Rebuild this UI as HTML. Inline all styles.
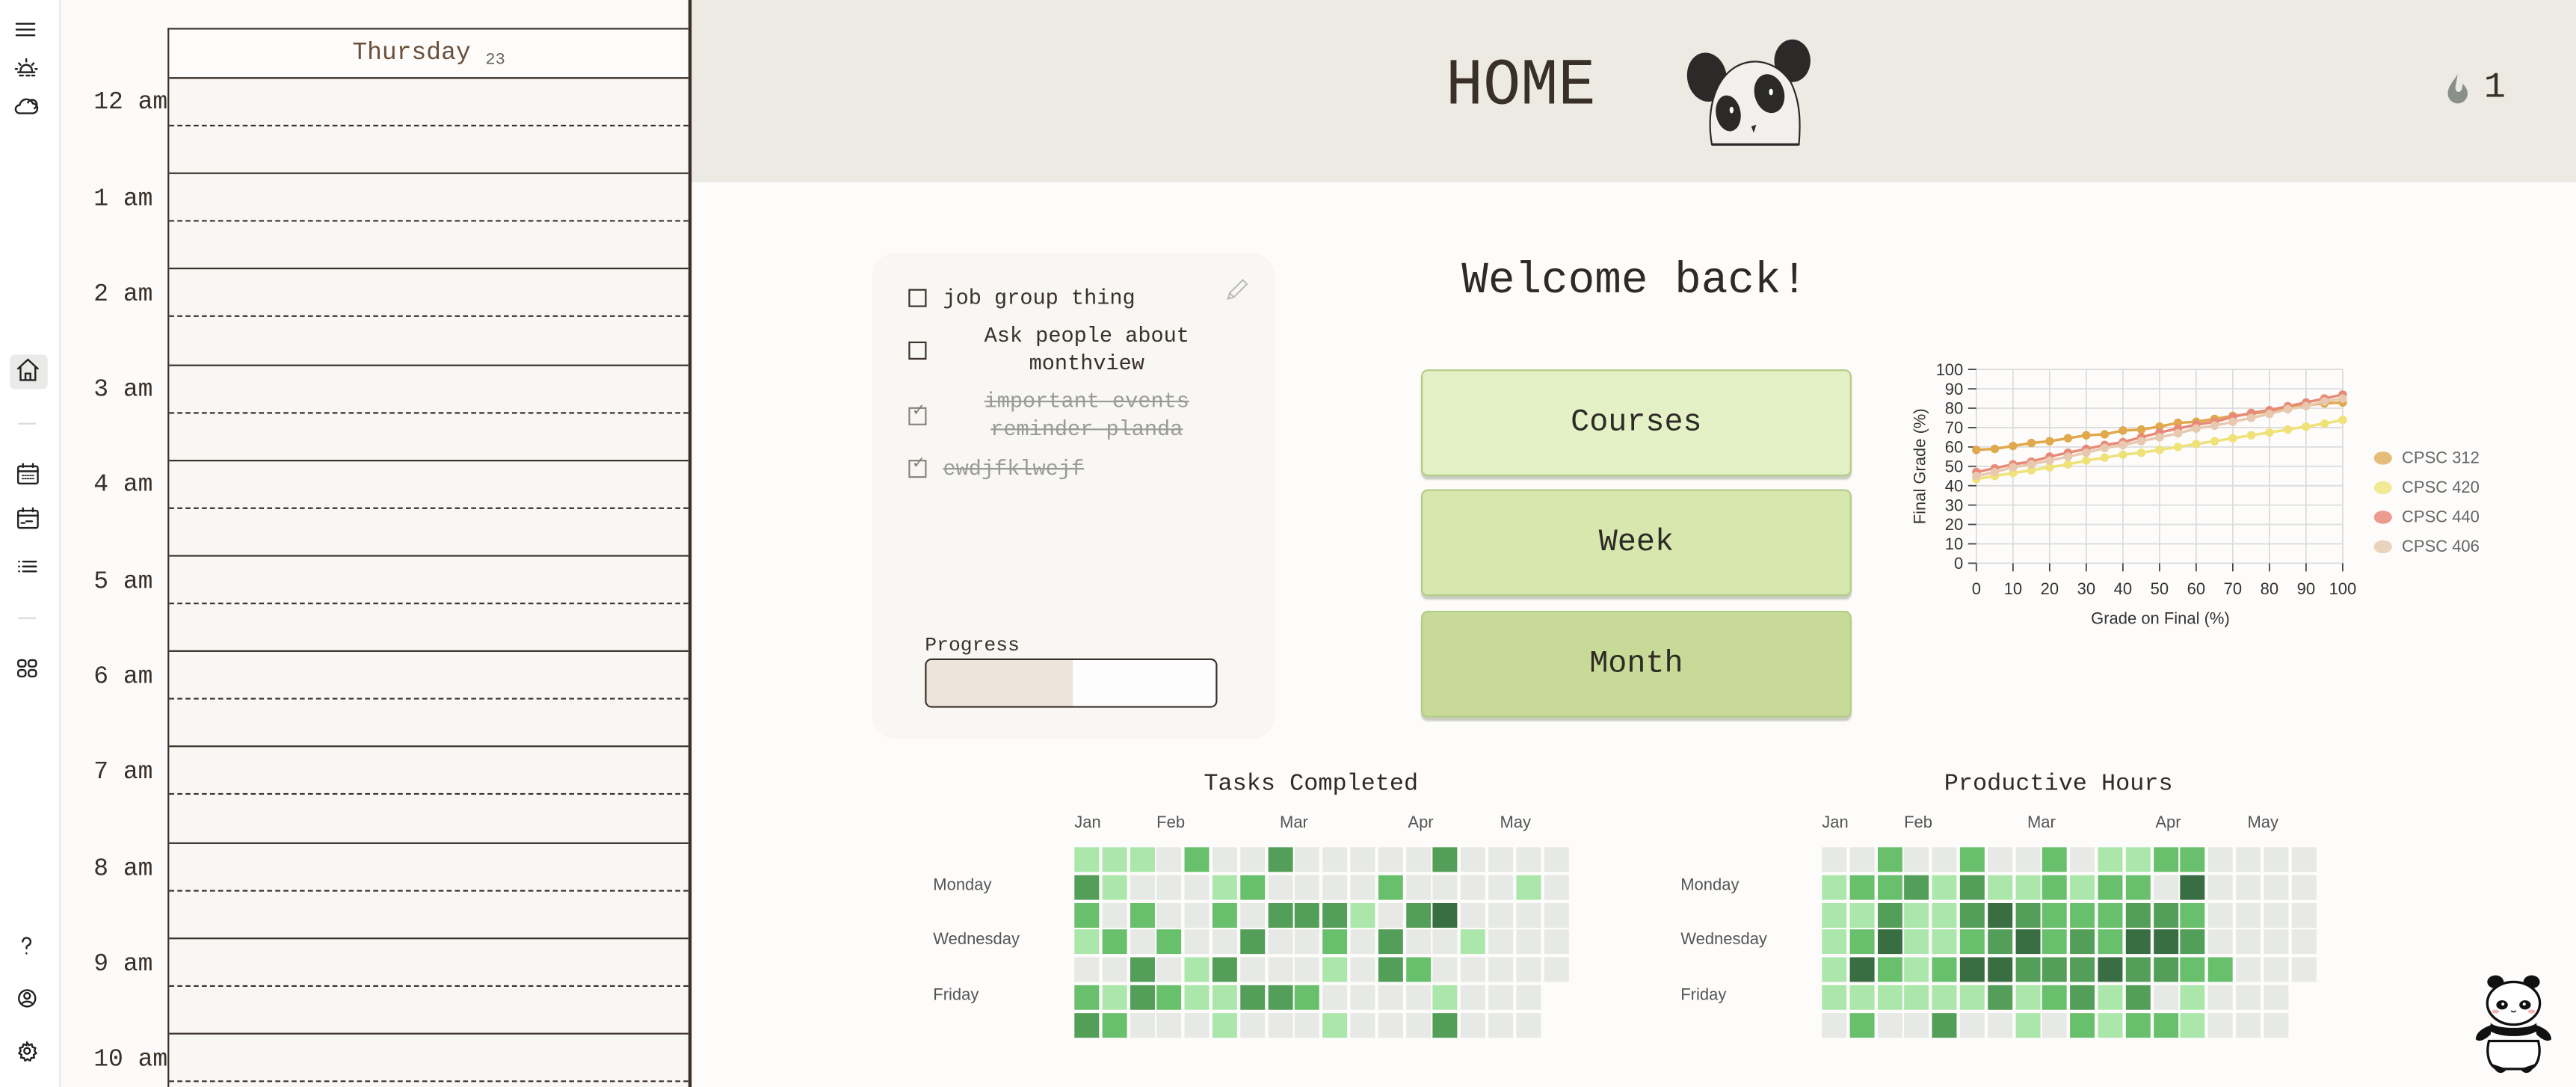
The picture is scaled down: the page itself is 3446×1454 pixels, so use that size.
<!DOCTYPE html>
<html><head><meta charset="utf-8">
<style>
html,body{margin:0;padding:0;width:3446px;height:1454px;overflow:hidden;background:#fdfcfb}
#s{position:absolute;left:0;top:0;width:1568px;height:662px;overflow:hidden;transform:scale(2.19770,2.19637);transform-origin:0 0;font-family:"Liberation Mono","DejaVu Sans Mono",monospace;color:#3a302a}
.a{position:absolute}
#side{left:0;top:0;width:36px;height:662px;background:#fff;border-right:1px solid #e8e8e6}
#cal{left:37px;top:0;width:382px;height:662px;background:#fcfbf9}
#grid{left:102px;top:17px;width:316px;height:645px;overflow:hidden;border-left:1px solid #3a302a;border-top:1px solid #3a302a;background:#f8f7f4}
#vline{left:418.5px;top:0;width:2px;height:662px;background:#3a302a}
.hdr{position:absolute;left:0;top:0;width:316px;height:29px;background:#fdfcfa;border-bottom:1px solid #3a302a;text-align:center;font-size:15px;line-height:30px;color:#6b4f3a}
.row{position:absolute;left:0;width:316px;height:58px;border-top:1px solid #3a302a}
.row:after{content:"";position:absolute;left:0;right:0;top:28px;border-top:1px dashed #3a302a}
.tl{position:absolute;left:57px;font-size:15px;color:#3a302a;white-space:pre}
#head{left:421px;top:0;width:1147px;height:111px;background:#ede9e3}
#main{left:421px;top:111px;width:1147px;height:551px;background:#fdfcfb}
.btn{position:absolute;left:865px;width:260px;height:63px;border:1px solid #b4cd86;border-radius:4px;box-shadow:0 2px 1px #c9ccc0;text-align:center;line-height:63px;font-size:19px;color:#2e2a25}
.ti{position:absolute;font-size:13px;color:#3a302a;text-align:center}
.cb{position:absolute;left:553px;width:9px;height:9px;border:1.2px solid #3a302a}
.done{color:#9a9a9a;text-decoration:line-through}
.cbd{border-color:#8a8480}
.hm{position:absolute;display:grid;grid-template-columns:repeat(18,15px);grid-auto-rows:15px;gap:1.8px 1.8px}
.hm i{display:block;background:#e7e9e6}
.hm i.b{background:#abe6ab}.hm i.c{background:#68c06c}.hm i.d{background:#539e58}.hm i.e{background:#386e42}
.hm i.n{background:transparent}
.ml{position:absolute;font-family:"Liberation Sans",sans-serif;font-size:10px;color:#555}
.dl{position:absolute;font-family:"Liberation Sans",sans-serif;font-size:10px;color:#555}
.ht{position:absolute;font-size:14.5px;color:#2e2a25;text-align:center;width:300px}
.lg{position:absolute;left:1445px;font-family:"Liberation Sans",sans-serif;font-size:10px;color:#666}
.lg b{display:inline-block;width:11px;height:8px;border-radius:50%;margin-right:6px;vertical-align:-1px}
</style></head><body>
<div id="s">
<div id="cal" class="a"></div>
<div id="side" class="a">
 <svg class="a" style="left:0;top:0" width="36" height="662" viewBox="0 0 36 662" fill="none" stroke="#222" stroke-width="1.1" stroke-linecap="round">
  <path d="M10 14.5h11M10 18h11M10 21.5h11"/>
  <path d="M11 44h10M12 46h2M16 46h2M19.5 46h1.5M12.5 43a3.5 3.5 0 0 1 7 0M16 36v1.5M11.5 38.5l1 1M20.5 38.5l-1 1M9.5 42h1M21.5 42h1"/>
  <path d="M12 69h7.5a3 3 0 0 0 0.5-6a4.2 4.2 0 0 0-8 1a2.5 2.5 0 0 0 0 5zM17 62.5a2.8 2.8 0 1 1 4 3.5"/>
  <rect x="6" y="216" width="23" height="21" rx="3" fill="#eaebe8" stroke="none"/>
  <path d="M11 224.5l6-5.5l6 5.5M12.5 223.5v8h9v-8M15.5 231.5v-4h3v4"/>
  <path d="M11.5 258h10" stroke="#ddd"/>
  <rect x="11" y="284" width="12" height="10.5" rx="1"/><path d="M11 287h12M14 282.5v2M20 282.5v2"/>
  <path d="M13.5 289.5h7M13.5 291.5h7" stroke-dasharray="0.8 0.8" stroke-width="0.8"/>
  <rect x="11" y="311" width="12" height="10.5" rx="1"/><path d="M11 314h12M14 309.5v2M20 309.5v2M13 318.5h2M16 317.5h3.5" />
  <path d="M14 342h8M14 345h8M14 348h8M11.5 342h.2M11.5 345h.2M11.5 348h.2"/>
  <path d="M11.5 376.5h10" stroke="#ddd"/>
  <rect x="11" y="402" width="4.6" height="4" rx="1.5"/><rect x="17.4" y="402" width="4.6" height="4" rx="1.5"/><rect x="11" y="408" width="4.6" height="4" rx="1.5"/><rect x="17.4" y="408" width="4.6" height="4" rx="1.5"/>
  <path d="M13.8 573.5a2.4 2.4 0 1 1 3.2 2.3c-.8.4-.9.9-.9 1.8M16.1 580.5v.2"/>
  <circle cx="16.5" cy="608" r="5"/><circle cx="16.5" cy="606.5" r="1.8"/><path d="M13 611.5a4 3 0 0 1 7 0"/>
  <circle cx="16.5" cy="640" r="1.8"/><path d="M16.5 635l1 1.5l1.8-.5l.5 1.7l1.7.6l-.5 1.7l1 1.4l-1.5 1l.3 1.7l-1.8.2l-.7 1.6l-1.5-.9l-1.5.9l-.7-1.6l-1.8-.2l.3-1.7l-1.5-1l1-1.4l-.5-1.7l1.7-.6l.5-1.7l1.8.5z"/>
 </svg>
</div>
<div class="tl" style="top:54px">12 am</div>
<div class="tl" style="top:113px">1 am</div>
<div class="tl" style="top:171px">2 am</div>
<div class="tl" style="top:229px">3 am</div>
<div class="tl" style="top:287px">4 am</div>
<div class="tl" style="top:346px">5 am</div>
<div class="tl" style="top:404px">6 am</div>
<div class="tl" style="top:462px">7 am</div>
<div class="tl" style="top:521px">8 am</div>
<div class="tl" style="top:579px">9 am</div>
<div class="tl" style="top:637px">10 am</div>
<div id="grid" class="a">
 <div class="hdr">Thursday <span style="font-size:10px;color:#666;vertical-align:-3px">23</span></div>
 <div class="row" style="top:29px"></div>
 <div class="row" style="top:87.2px"></div>
 <div class="row" style="top:145.4px"></div>
 <div class="row" style="top:203.6px"></div>
 <div class="row" style="top:261.8px"></div>
 <div class="row" style="top:320px"></div>
 <div class="row" style="top:378.2px"></div>
 <div class="row" style="top:436.4px"></div>
 <div class="row" style="top:494.6px"></div>
 <div class="row" style="top:552.8px"></div>
 <div class="row" style="top:611px"></div>
</div>
<div id="head" class="a"></div>
<div id="main" class="a"></div>
<div id="vline" class="a"></div>

<div class="a" style="left:880px;top:30px;font-size:40px;line-height:48px;color:#3a302a;transform:scaleX(0.95);transform-origin:0 0">HOME</div>
<svg class="a" style="left:1020px;top:20px" width="90" height="72" viewBox="0 0 90 72">
 <ellipse cx="19" cy="27" rx="12" ry="15" fill="#2b2a28" transform="rotate(-10 19 27)"/>
 <ellipse cx="71" cy="17" rx="11" ry="13" fill="#2b2a28"/>
 <path d="M22 68C19 50 22 30 36 21C48 14 62 18 70 30C76 42 76 55 75 68Z" fill="#f1f0ec" stroke="#2b2a28" stroke-width="1"/>
 <path d="M22 68h53" stroke="#2b2a28" stroke-width="1.5"/>
 <ellipse cx="32" cy="49" rx="7.5" ry="11" fill="#2b2a28" transform="rotate(-10 32 49)"/>
 <ellipse cx="57" cy="37" rx="9" ry="12" fill="#2b2a28" transform="rotate(-15 57 37)"/>
 <ellipse cx="34" cy="47" rx="1.2" ry="2" fill="#fff"/>
 <ellipse cx="58" cy="36" rx="1.2" ry="2" fill="#fff"/>
 <path d="M46 57l3-1l-1.5 5z" fill="#2b2a28"/>
</svg>
<svg class="a" style="left:1488px;top:44px" width="16" height="20" viewBox="0 0 16 20"><path d="M8 1C6 5 2 8 2 13a6 6 0 0 0 12 0c0-3-2-5-3-6c0 3-1 5-2.5 5S6 10 7 7z" fill="#8b8f89"/></svg>
<div class="a" style="left:1512px;top:41px;font-size:22px;line-height:26px;color:#3a302a">1</div>

<!-- todo card -->
<div class="a" style="left:531px;top:154px;width:245px;height:296px;background:#f8f7f4;border-radius:14px"></div>
<div class="cb" style="top:176px"></div>
<div class="ti" style="left:574px;top:174px">job group thing</div>
<svg class="a" style="left:745px;top:168px" width="16" height="16" viewBox="0 0 16 16" fill="none" stroke="#b8b8b8" stroke-width="0.9"><path d="M2.5 14l1-3.5l8-8l2.5 2.5l-8 8z M3.5 10.5l2.5 2.5"/></svg>
<div class="cb" style="top:208px"></div>
<div class="ti" style="left:584px;top:197px;width:155px;line-height:16.5px">Ask people about monthview</div>
<div class="cb cbd" style="top:248px"></div>
<div class="a" style="left:555px;top:245px;font-size:10px;color:#8a7d72;font-family:'DejaVu Sans',sans-serif">✓</div>
<div class="ti done" style="left:584px;top:237px;width:155px;line-height:16.5px">important events reminder planda</div>
<div class="cb cbd" style="top:280px"></div>
<div class="a" style="left:555px;top:277px;font-size:10px;color:#8a7d72;font-family:'DejaVu Sans',sans-serif">✓</div>
<div class="ti done" style="left:574px;top:278px">ewdjfklwejf</div>
<div class="a" style="left:563px;top:386px;font-size:12px">Progress</div>
<div class="a" style="left:563px;top:401px;width:176px;height:28px;border:1.3px solid #3a302a;border-radius:4px;background:#fdfdfd;overflow:hidden"><div style="width:89px;height:100%;background:#ede4dc"></div></div>

<div class="a" style="left:845px;top:155px;width:300px;text-align:center;font-size:27px;line-height:34px;color:#2e2a25">Welcome back!</div>
<div class="btn" style="top:225px;background:#e4f0c5">Courses</div>
<div class="btn" style="top:298px;background:#d8e7ae">Week</div>
<div class="btn" style="top:372px;background:#c8da98">Month</div>

<!-- chart -->
<svg class="a" style="left:1150px;top:210px" width="300" height="180" viewBox="1150 210 300 180" font-family="Liberation Sans, sans-serif" font-size="10" fill="#333">
 <defs>
  <marker id="m1" markerUnits="userSpaceOnUse" markerWidth="6" markerHeight="6" refX="3" refY="3"><circle cx="3" cy="3" r="2.6" fill="#e0a94e"/></marker>
  <marker id="m2" markerUnits="userSpaceOnUse" markerWidth="6" markerHeight="6" refX="3" refY="3"><circle cx="3" cy="3" r="2.6" fill="#efe279"/></marker>
  <marker id="m3" markerUnits="userSpaceOnUse" markerWidth="6" markerHeight="6" refX="3" refY="3"><circle cx="3" cy="3" r="2.6" fill="#e88a78"/></marker>
  <marker id="m4" markerUnits="userSpaceOnUse" markerWidth="6" markerHeight="6" refX="3" refY="3"><circle cx="3" cy="3" r="2.6" fill="#e8c8ae"/></marker>
 </defs>
 <g stroke="#dcdcdc" stroke-width="0.8">
  <path d="M1203 225h223M1203 236.8h223M1203 248.6h223M1203 260.4h223M1203 272.2h223M1203 284h223M1203 295.8h223M1203 307.6h223M1203 319.4h223M1203 331.2h223M1203 343h223"/>
  <path d="M1203 225v118M1225.3 225v118M1247.6 225v118M1269.9 225v118M1292.2 225v118M1314.5 225v118M1336.8 225v118M1359.1 225v118M1381.4 225v118M1403.7 225v118M1426 225v118"/>
 </g>
 <g stroke="#444" stroke-width="0.8">
  <path d="M1198 225h5M1198 236.8h5M1198 248.6h5M1198 260.4h5M1198 272.2h5M1198 284h5M1198 295.8h5M1198 307.6h5M1198 319.4h5M1198 331.2h5M1198 343h5"/>
  <path d="M1203 343v5M1225.3 343v5M1247.6 343v5M1269.9 343v5M1292.2 343v5M1314.5 343v5M1336.8 343v5M1359.1 343v5M1381.4 343v5M1403.7 343v5M1426 343v5"/>
 </g>
 <g text-anchor="end">
  <text x="1195" y="228.5">100</text><text x="1195" y="240.3">90</text><text x="1195" y="252.1">80</text><text x="1195" y="263.9">70</text><text x="1195" y="275.7">60</text><text x="1195" y="287.5">50</text><text x="1195" y="299.3">40</text><text x="1195" y="311.1">30</text><text x="1195" y="322.9">20</text><text x="1195" y="334.7">10</text><text x="1195" y="346.5">0</text>
 </g>
 <g text-anchor="middle">
  <text x="1203" y="362">0</text><text x="1225.3" y="362">10</text><text x="1247.6" y="362">20</text><text x="1269.9" y="362">30</text><text x="1292.2" y="362">40</text><text x="1314.5" y="362">50</text><text x="1336.8" y="362">60</text><text x="1359.1" y="362">70</text><text x="1381.4" y="362">80</text><text x="1403.7" y="362">90</text><text x="1426" y="362">100</text>
  <text x="1315" y="380">Grade on Final (%)</text>
  <text x="1172" y="284" transform="rotate(-90 1172 284)">Final Grade (%)</text>
 </g>
 <g fill="none" stroke-width="1.6">
  <polyline stroke="#e0a94e" marker-start="url(#m1)" marker-mid="url(#m1)" marker-end="url(#m1)" points="1203,274 1214.2,273.4 1225.3,271.6 1236.5,269.8 1247.6,268.7 1258.8,266.9 1269.9,265.1 1281.1,264.5 1292.2,262.2 1303.4,261.6 1314.5,259.8 1325.7,257.5 1336.8,256.9 1348,255.1 1359.1,253.3 1370.3,252.1 1381.4,250.4 1392.6,248.6 1403.7,246.8 1414.9,245.7 1426,245.1"/>
  <polyline stroke="#efe279" marker-start="url(#m2)" marker-mid="url(#m2)" marker-end="url(#m2)" points="1203,291.7 1214.2,289.9 1225.3,288.1 1236.5,286.4 1247.6,284.6 1258.8,282.8 1269.9,280.5 1281.1,278.7 1292.2,276.9 1303.4,275.7 1314.5,274 1325.7,272.2 1336.8,270.4 1348,268.7 1359.1,266.9 1370.3,265.1 1381.4,263.4 1392.6,261.6 1403.7,259.8 1414.9,258 1426,255.7"/>
  <polyline stroke="#e88a78" marker-start="url(#m3)" marker-mid="url(#m3)" marker-end="url(#m3)" points="1203,287.5 1214.2,285.2 1225.3,282.8 1236.5,281.1 1247.6,278.1 1258.8,275.7 1269.9,273.4 1281.1,271 1292.2,269.3 1303.4,266.3 1314.5,263.4 1325.7,261 1336.8,258.6 1348,256.9 1359.1,253.9 1370.3,251.5 1381.4,249.8 1392.6,247.4 1403.7,245.1 1414.9,242.7 1426,240.3"/>
  <polyline stroke="#e8c8ae" marker-start="url(#m4)" marker-mid="url(#m4)" marker-end="url(#m4)" points="1203,289.9 1214.2,287.5 1225.3,284.6 1236.5,282.8 1247.6,280.5 1258.8,278.1 1269.9,275.7 1281.1,272.8 1292.2,271 1303.4,268.7 1314.5,266.3 1325.7,263.9 1336.8,261 1348,259.2 1359.1,256.9 1370.3,254.5 1381.4,252.1 1392.6,249.2 1403.7,247.4 1414.9,244.5 1426,242.7"/>
 </g>
</svg>
<div class="lg" style="top:274px"><b style="background:#e6bd78"></b>CPSC 312</div>
<div class="lg" style="top:292px"><b style="background:#f1e995"></b>CPSC 420</div>
<div class="lg" style="top:310px"><b style="background:#ec9c8e"></b>CPSC 440</div>
<div class="lg" style="top:328px"><b style="background:#ebd2bd"></b>CPSC 406</div>

<!-- heatmap 1 -->
<div class="ht" style="left:648px;top:470px">Tasks Completed</div>
<div class="ml" style="left:654px;top:496px">Jan</div><div class="ml" style="left:704px;top:496px">Feb</div><div class="ml" style="left:779px;top:496px">Mar</div><div class="ml" style="left:857px;top:496px">Apr</div><div class="ml" style="left:913px;top:496px">May</div>
<div class="dl" style="left:568px;top:534px">Monday</div><div class="dl" style="left:568px;top:567px">Wednesday</div><div class="dl" style="left:568px;top:601px">Friday</div>
<div class="hm" style="left:654px;top:516px">
<i class=b></i><i class=b></i><i class=b></i><i></i><i class=c></i><i></i><i></i><i class=d></i><i></i><i></i><i></i><i></i><i></i><i class=d></i><i></i><i></i><i></i><i></i>
<i class=d></i><i class=b></i><i></i><i></i><i></i><i class=b></i><i class=c></i><i></i><i></i><i></i><i></i><i class=c></i><i></i><i></i><i></i><i></i><i class=b></i><i></i>
<i class=c></i><i></i><i class=c></i><i></i><i></i><i class=c></i><i></i><i class=d></i><i class=d></i><i class=d></i><i class=b></i><i></i><i class=d></i><i class=e></i><i></i><i></i><i></i><i></i>
<i class=b></i><i class=c></i><i></i><i class=c></i><i></i><i></i><i class=d></i><i></i><i></i><i class=c></i><i></i><i class=d></i><i></i><i></i><i class=b></i><i></i><i></i><i></i>
<i></i><i></i><i class=d></i><i></i><i class=b></i><i class=d></i><i></i><i></i><i></i><i class=b></i><i></i><i class=d></i><i class=c></i><i></i><i></i><i></i><i></i><i></i>
<i class=c></i><i class=b></i><i class=d></i><i class=c></i><i class=b></i><i class=b></i><i class=d></i><i class=d></i><i class=c></i><i></i><i></i><i></i><i></i><i class=b></i><i></i><i></i><i></i><i class=n></i>
<i class=d></i><i class=c></i><i></i><i></i><i></i><i class=b></i><i></i><i></i><i></i><i class=b></i><i></i><i></i><i></i><i class=d></i><i></i><i></i><i></i><i class=n></i>
</div>

<!-- heatmap 2 -->
<div class="ht" style="left:1103px;top:470px">Productive Hours</div>
<div class="ml" style="left:1109px;top:496px">Jan</div><div class="ml" style="left:1159px;top:496px">Feb</div><div class="ml" style="left:1234px;top:496px">Mar</div><div class="ml" style="left:1312px;top:496px">Apr</div><div class="ml" style="left:1368px;top:496px">May</div>
<div class="dl" style="left:1023px;top:534px">Monday</div><div class="dl" style="left:1023px;top:567px">Wednesday</div><div class="dl" style="left:1023px;top:601px">Friday</div>
<div class="hm" style="left:1109px;top:516px">
<i></i><i></i><i class=c></i><i></i><i></i><i class=c></i><i></i><i></i><i class=c></i><i></i><i class=b></i><i class=b></i><i class=c></i><i class=c></i><i></i><i></i><i></i><i></i>
<i class=b></i><i class=c></i><i class=c></i><i class=d></i><i class=b></i><i class=d></i><i class=b></i><i class=b></i><i class=c></i><i class=b></i><i class=c></i><i class=c></i><i></i><i class=e></i><i></i><i></i><i></i><i></i>
<i class=b></i><i class=b></i><i class=d></i><i class=b></i><i class=b></i><i class=d></i><i class=e></i><i class=d></i><i class=c></i><i class=c></i><i class=c></i><i class=d></i><i class=d></i><i class=c></i><i></i><i></i><i></i><i></i>
<i class=b></i><i class=c></i><i class=e></i><i class=b></i><i class=b></i><i class=c></i><i class=d></i><i class=e></i><i class=c></i><i class=d></i><i class=c></i><i class=e></i><i class=e></i><i class=d></i><i></i><i></i><i></i><i></i>
<i class=b></i><i class=e></i><i class=c></i><i class=b></i><i class=c></i><i class=e></i><i class=e></i><i class=d></i><i class=d></i><i class=d></i><i class=e></i><i class=d></i><i class=d></i><i class=c></i><i class=c></i><i></i><i></i><i></i>
<i class=b></i><i class=b></i><i class=b></i><i class=b></i><i class=b></i><i class=b></i><i class=d></i><i class=b></i><i class=c></i><i class=d></i><i class=b></i><i class=d></i><i></i><i class=b></i><i></i><i></i><i></i><i class=n></i>
<i></i><i class=c></i><i></i><i></i><i class=d></i><i></i><i></i><i class=b></i><i></i><i class=c></i><i class=b></i><i class=c></i><i class=c></i><i class=b></i><i></i><i></i><i></i><i class=n></i>
</div>

<!-- little panda -->
<svg class="a" style="left:1505px;top:590px" width="50" height="66" viewBox="0 0 50 66">
 <ellipse cx="14" cy="8" rx="5" ry="4" fill="#111"/><ellipse cx="36" cy="8" rx="5" ry="4" fill="#111"/>
 <path d="M10 44c-2 8 0 15 5 17h20c5-2 7-9 5-17z" fill="#fff" stroke="#111" stroke-width="1.5"/>
 <path d="M12 34c-6 2-10 5-10 9c2 2 6 0 9-3zM38 34c6 2 10 5 10 9c-2 2-6 0-9-3z" fill="#111"/>
 <path d="M12 58c2 6 6 7 9 3zM38 58c-2 6-6 7-9 3z" fill="#111"/>
 <path d="M11 33c4 4 24 4 28 0l0 5c-6 4-22 4-28 0z" fill="#111"/>
 <ellipse cx="25" cy="21" rx="16" ry="13" fill="#fff" stroke="#111" stroke-width="1.5"/>
 <ellipse cx="18" cy="22" rx="3.5" ry="2.8" fill="#111"/><ellipse cx="32" cy="22" rx="3.5" ry="2.8" fill="#111"/>
 <circle cx="18.5" cy="21.5" r="0.9" fill="#fff"/><circle cx="31.5" cy="21.5" r="0.9" fill="#fff"/>
 <ellipse cx="14" cy="26" rx="2.2" ry="1.2" fill="#f5b5b5"/><ellipse cx="36" cy="26" rx="2.2" ry="1.2" fill="#f5b5b5"/>
 <path d="M23.5 25.5q1.5 1.5 3 0" fill="none" stroke="#111" stroke-width="0.7"/>
</svg>
</div>
</body></html>
